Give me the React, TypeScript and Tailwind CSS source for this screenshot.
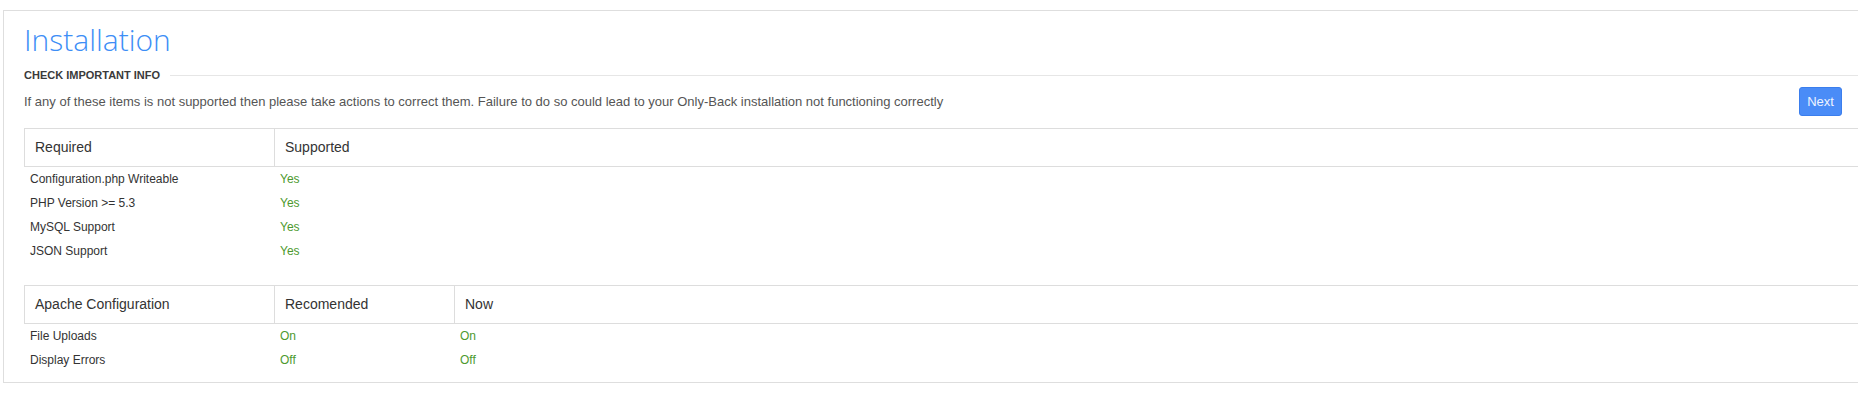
import React from "react";

const green = "text-[#4d9a2e]";

function HeaderCell({ children, className = "" }: { children: React.ReactNode; className?: string }) {
  return (
    <div className={`flex h-full items-center pl-[10px] text-[14px] text-[#333] ${className}`}>{children}</div>
  );
}

export default function App() {
  const required = [
    ["Configuration.php Writeable", "Yes"],
    ["PHP Version >= 5.3", "Yes"],
    ["MySQL Support", "Yes"],
    ["JSON Support", "Yes"],
  ];
  const apache = [
    ["File Uploads", "On", "On"],
    ["Display Errors", "Off", "Off"],
  ];
  return (
    <div className="h-[407px] w-full overflow-hidden bg-white font-['Liberation_Sans',Arial,sans-serif]">
      <div className="ml-[3px] mt-[10px] w-[1900px] border border-[#dedede] pb-[10px] pl-[20px]">
        <h1 className="mt-[12px] h-[33px] font-['Open_Sans',sans-serif] text-[30px] font-light leading-[33px] text-[#3d8ef6]">
          Installation
        </h1>
        <div className="mt-[11px] flex h-[16px] items-center">
          <span className="text-[11px] font-bold leading-[16px] text-[#3a3a3a]">CHECK IMPORTANT INFO</span>
          <div className="ml-[10px] h-px flex-1 bg-[#e6e6e6]" />
        </div>
        <div className="mt-[4px] flex h-[29px] w-[1818px] items-center justify-between">
          <p className="text-[13px] text-[#555]">
            If any of these items is not supported then please take actions to correct them. Failure to do so could
            lead to your Only-Back installation not functioning correctly
          </p>
          <button className="h-[29px] w-[43px] rounded-[3px] border border-[#3b7eed] bg-[#4a8cf7] text-[13px] text-[#eef4ff]">
            Next
          </button>
        </div>

        <div className="mt-[12px]">
          <div className="flex h-[39px] border-y border-[#dddddd]">
            <HeaderCell className="w-[251px] border-x border-[#dddddd]">Required</HeaderCell>
            <HeaderCell className="flex-1">Supported</HeaderCell>
          </div>
          {required.map(([label, value]) => (
            <div key={label} className="flex h-[24px] items-center text-[12px]">
              <div className="w-[251px] pl-[6px] text-[#333]">{label}</div>
              <div className={`pl-[5px] ${green}`}>{value}</div>
            </div>
          ))}
        </div>

        <div className="mt-[22px]">
          <div className="flex h-[39px] border-y border-[#dddddd]">
            <HeaderCell className="w-[251px] border-x border-[#dddddd]">Apache Configuration</HeaderCell>
            <HeaderCell className="w-[180px] border-r border-[#dddddd]">Recomended</HeaderCell>
            <HeaderCell className="flex-1">Now</HeaderCell>
          </div>
          {apache.map(([label, rec, now]) => (
            <div key={label} className="flex h-[24px] items-center text-[12px]">
              <div className="w-[251px] pl-[6px] text-[#333]">{label}</div>
              <div className={`w-[180px] pl-[5px] ${green}`}>{rec}</div>
              <div className={`pl-[5px] ${green}`}>{now}</div>
            </div>
          ))}
        </div>
      </div>
    </div>
  );
}
